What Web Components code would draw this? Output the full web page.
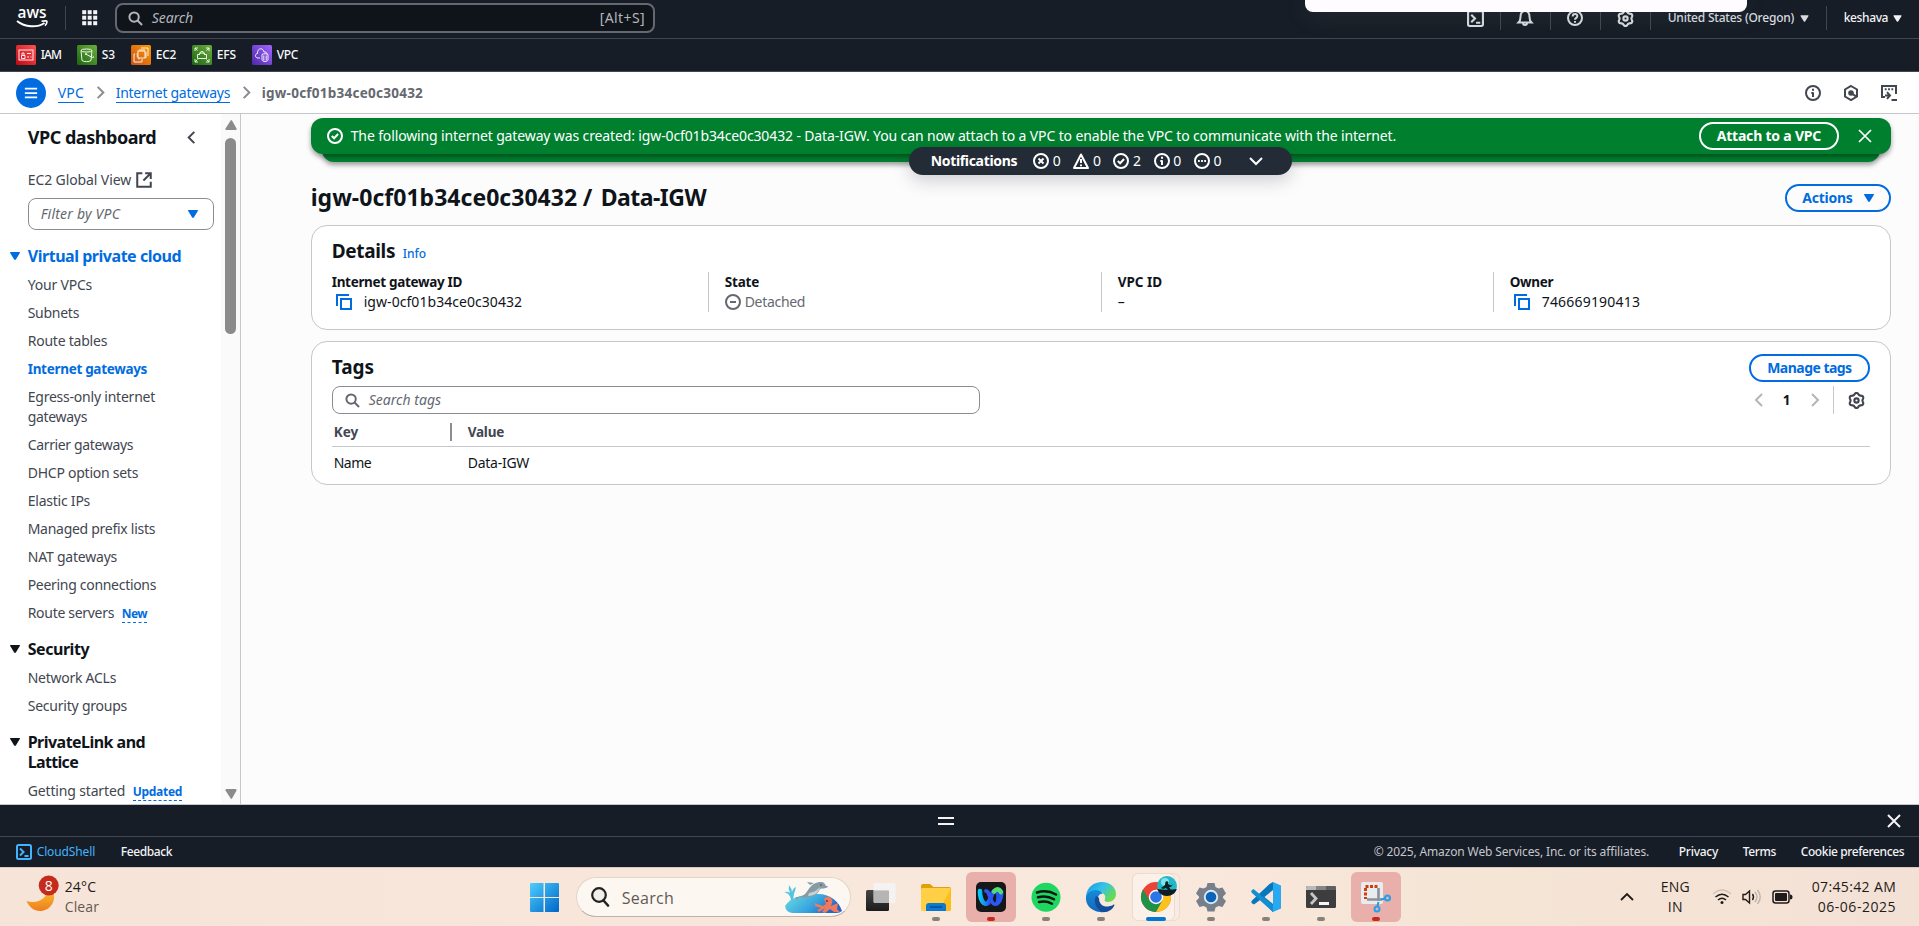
<!DOCTYPE html>
<html lang="en">
<head>
<meta charset="utf-8">
<title>igw-0cf01b34ce0c30432 | VPC Console</title>
<style>
html,body{margin:0;height:926px;overflow:hidden;background:#fcfcfd}
body{font:14px/20px "Noto Sans","Open Sans",sans-serif;color:#0f141a}
</style>
</head>
<body>
<console-app></console-app>
<script>
const define = (name, css, html, after) => customElements.define(name, class extends HTMLElement {
  connectedCallback() {
    if (this.shadowRoot) return;
    const root = this.attachShadow({mode: 'open'});
    root.innerHTML = `<style>*{box-sizing:border-box}:host{display:block;box-sizing:border-box}${css}</style>` + (typeof html === 'function' ? html(this) : html);
    if (after) after(this, root);
  }
});

/* Scalloped outline used by the settings icon */
const gear = (() => {
  const p = [];
  for (let i = 0; i < 96; i++) {
    const a = i / 96 * Math.PI * 2, r = 6.35 + 0.75 * Math.cos(6 * (a - Math.PI / 2));
    p.push((8 + r * Math.cos(a)).toFixed(2) + ' ' + (8 + r * Math.sin(a)).toFixed(2));
  }
  return 'M' + p.join('L') + 'Z';
})();

const icons = {
  search: '<circle cx="6.5" cy="6.5" r="5"/><path d="m10.2 10.2 4.8 4.8"/>',
  grid: [1,6.5,12].map(y => [1,6.5,12].map(x => `<path stroke="none" fill="currentColor" d="M${x-.8} ${y-.8}h4v4h-4z"/>`).join('')).join(''),
  shell: '<rect x="1" y="1" width="14" height="14" rx="1.5"/><path d="m4 4.5 3.5 3.5L4 11.500M8.500 12H12.500"/>',
  bell: '<path d="M1.500 12.500c1.500-1.500 2-3 2-5.500 0-3.500 1.500-6 4.500-6s4.500 2.500 4.500 6c0 2.500.5 4 2 5.500zM6 13c0 2.500 4 2.500 4 0"/>',
  help: '<circle cx="8" cy="8" r="7"/><path d="M5.700 6.400C5.700 3.200 10.400 3.400 10.300 6.200 10.200 7.800 8 8 8 9.800M8 11v1.700"/>',
  gear: `<path d="${gear}"/><circle cx="8" cy="8" r="2"/>`,
  info: '<circle cx="8" cy="8" r="7"/><path d="M6.300 8H8M8 7.200V12M8 3.800v1.900"/>',
  hex: '<path d="M8 1l6 3.500v7L8 15l-6-3.500v-7z"/><circle cx="8" cy="8" r="1.800" fill="currentColor"/><path d="m8 8 5 3.400"/>',
  termout: '<path d="M4 12H1V1h14v8"/><path d="M3.800 4.300h1.800M7.100 4.300h1.800M10.400 4.300h1.800"/><path d="M4 10.500H8M6 7.200l3 3.300-3 3.300M10.500 15H16"/>',
  left: '<path d="M11 2 5 8l6 6"/>',
  right: '<path d="m5 2 6 6-6 6"/>',
  down: '<path d="m2 5 6 6 6-6"/>',
  up: '<path d="m2 11 6-6 6 6"/>',
  close: '<path d="m2 2 12 12M14 2 2 14"/>',
  ext: '<path d="M6.500 2H2v12h12V9.500M9 2h5v5M14 2 7.500 8.500"/>',
  copy: '<path d="M2 12V1h12" transform="translate(-1)"/><path d="M5 5h10v10H5z"/>',
  caret: '<path stroke="none" fill="currentColor" d="M3.700 4h8.600q1.200 0 .5 1.100L9 11.300q-1 1.400-2 0L3.200 5.100Q2.500 4 3.700 4z"/>',
  ok: '<circle cx="8" cy="8" r="7"/><path d="m4.800 8 2.300 2.300 4-4.300"/>',
  err: '<circle cx="8" cy="8" r="7"/><path d="m5.500 5.500 5 5M10.500 5.500l-5 5"/>',
  warn: '<path d="M8 1.500 15 15H1zM8 6v4M8 11.500v1.700" stroke-linejoin="round"/>',
  dots: '<circle cx="8" cy="8" r="7"/><path d="M4 8h1.800M7.100 8h1.800M10.200 8H12"/>',
  minus: '<circle cx="8" cy="8" r="7"/><path d="M5 8h6"/>',
  drag: '<path d="M0 5h16M0 11h16"/>',
  menu: '<path d="M1 3h14M1 8h14M1 13h14"/>'
};
define('ui-icon', ':host{flex:none}svg{display:block;fill:none;stroke:currentColor}',
  e => `<svg width="${e.getAttribute('size') || 16}" height="${e.getAttribute('size') || 16}" viewBox="0 0 16 16" overflow="visible" stroke-width="${e.getAttribute('sw') || 2}">${icons[e.getAttribute('name')]}</svg>`);

/* Text run with a set advance width: tracking is spread over its letters */
const ruler = document.createElement('canvas').getContext('2d');
customElements.define('ui-t', class extends HTMLElement {
  connectedCallback() {
    if (!this.shadowRoot) this.attachShadow({mode: 'open'}).innerHTML = '<style>:host{display:inline-block;white-space:nowrap;flex:none;vertical-align:top;text-indent:-.3px}</style><slot></slot>';
    const a = n => this.getAttribute(n), size = a('s') || 14, weight = a('b') || 400, st = this.hasAttribute('i') ? 'italic' : 'normal';
    const fam = a('f') || '"Noto Sans","Open Sans",sans-serif';
    ruler.font = `${st} ${weight} ${size}px ${fam}`;
    const w = +a('w'), text = this.textContent;
    this.style.fontFamily = fam; this.style.fontSize = size + 'px'; this.style.fontWeight = weight; this.style.fontStyle = st;
    if (w) { this.style.width = w + 'px'; this.style.letterSpacing = ((w - ruler.measureText(text).width + .4) / text.length).toFixed(3) + 'px'; }
  }
});

define('ui-button', ':host{height:28px;border:2px solid currentColor;border-radius:20px;display:flex;align-items:center;justify-content:center;flex:none;gap:8px}', '<slot></slot>');
define('v-line', ':host{width:1px;background:#424650;height:24px;flex:none}', '');

define('aws-header', `:host{height:39px;background:#161d26;border-bottom:1px solid #424650;display:flex;align-items:center;padding:0 0 2px 16px;color:#d8dbe0;position:relative}
.logo{width:33px;height:22px;flex:none}.logo svg{display:block}
.s{margin-left:17px;width:540px;height:30px;border:2px solid #656871;border-radius:8px;background:#0f141a;display:flex;align-items:center;padding:0 8px 0 11px;color:#b4b4bb;flex:none}
.r{margin-left:auto;display:flex;align-items:center;padding-right:15px}
.pop{position:absolute;left:1305px;top:0;width:442px;height:12px;background:#fffcff;border-radius:0 0 8px 8px;box-shadow:0 4px 22px rgba(120,130,120,.18)}`,
`<div class="logo"><svg width="33" height="22" viewBox="0 0 33 22" overflow="visible"><text x="1.500" y="11" font-family="Open Sans" font-weight="600" font-size="16" textLength="29" lengthAdjust="spacingAndGlyphs" fill="#fff">aws</text><path d="M1 14C9 20.500 21 21 28.500 16" fill="none" stroke="#fff" stroke-width="2"/><path d="M25.500 14.300c4-.8 5.500-.5 5.500.3s-.8 3-2 4.200" fill="none" stroke="#fff" stroke-width="1.600"/></svg></div>
<v-line style="margin-left:16px"></v-line><ui-icon name="grid" style="margin-left:16px;color:#f3f3f7"></ui-icon>
<div class="s"><ui-icon name="search" size="15" sw="2.1"></ui-icon><ui-t i w="41" style="margin-left:9px">Search</ui-t><ui-t w="45" style="margin-left:auto">[Alt+S]</ui-t></div>
<div class="r"><ui-icon name="shell" size="17"></ui-icon><v-line style="margin:0 16px"></v-line><ui-icon name="bell"></ui-icon><v-line style="margin:0 16px 0 17px"></v-line><ui-icon name="help"></ui-icon><v-line style="margin:0 16px 0 17px"></v-line><ui-icon name="gear" size="17"></ui-icon><v-line style="margin:0 17px 0 16px"></v-line>
<ui-t s="12" b="500" w="126">United States (Oregon)</ui-t><ui-icon name="caret" size="13" style="margin-left:4px"></ui-icon><v-line style="margin:0 17px 0 15px"></v-line><ui-t s="12" b="500" w="44" style="color:#f3f3f7">keshava</ui-t><ui-icon name="caret" size="13" style="margin-left:3px;color:#f3f3f7"></ui-icon></div><div class="pop"></div>`);

const svc = {
  IAM: ['#bd0816','#ff5252','<rect x="3" y="5" width="14" height="10"/><path d="M5.500 13.500v-3h3.500v3zM6 10V8h2v2M11 8.500h4M11 12h2M14.500 12h1"/>'],
  S3: ['#1b660f','#6cae3e','<ellipse cx="9.500" cy="5.500" rx="5.500" ry="1.500"/><path d="m4 5.500 1 10c1.500 1.500 7.500 1.500 9 0l1-10M9.500 9.500l6 3c1.500.5 1.500-.8.3-1.500"/><circle cx="9" cy="9" r=".7"/>'],
  EC2: ['#c8511b','#ff9900','<rect x="7" y="6" width="7" height="7"/><path d="M9 4V6M11 4v2M13 4v2M14 8h2M14 10h2M14 12h2M8 13v1.500M5.500 9H7M5.500 11H7"/><path d="M10 3h7v8M4 9H3v8h8v-3"/>'],
  EFS: ['#1b660f','#6cae3e','<path d="M5.500 9.500h2l1-1.500h3l1 1.500h2v4h-9zM7.500 9.500c0-4 5-4 5 0M3 6V3h3M14 3h3v3M3 14v3h3M14 17h3v-3M3 3l2.500 2.500M17 3l-2.500 2.500M3 17l2.500-2.500M17 17l-2.500-2.500"/>'],
  VPC: ['#4d27a8','#a166ff','<path d="M8 13H6c-3 0-3.500-4-.5-4.500C5 3 11 2 12 7c1.500-.4 3 .5 3 2M10 9.500c1-1 5-1 6 0V15c-1 2-5 2-6 0zM11.800 10.500v5M14.200 10.500v5"/>']
};
define('aws-service', ':host{display:flex;align-items:center;gap:5px;color:#f9f9fa}svg{display:block}',
  e => { const n = e.getAttribute('name'), s = svc[n]; return `<svg width="20" height="20" viewBox="0 0 20 20" fill="none" stroke="#fff" stroke-width=".9"><defs><linearGradient id="g" x1="0" y1="1" x2="1" y2="0"><stop stop-color="${s[0]}"/><stop offset="1" stop-color="${s[1]}"/></linearGradient></defs><rect width="20" height="20" rx="1.500" fill="url(#g)" stroke="none"/>${s[2]}</svg><ui-t s="12" b="500" w="${e.getAttribute('w')}">${n}</ui-t>`; });
define('aws-favorites', ':host{height:33px;background:#161d26;border-bottom:1px solid #424650;display:flex;align-items:center;padding-left:16px;gap:16px}',
`<aws-service name="IAM" w="20"></aws-service><aws-service name="S3" w="13"></aws-service><aws-service name="EC2" w="20"></aws-service><aws-service name="EFS" w="19"></aws-service><aws-service name="VPC" w="21"></aws-service>`);

define('aws-breadcrumbs', `:host{height:42px;background:#fff;border-bottom:1px solid #c6c6cd;display:flex;align-items:center;padding:0 22px 0 16px;color:#424650}
.m{width:30px;height:30px;border-radius:50%;background:#006ce0;color:#fff;display:flex;align-items:center;justify-content:center}
.l{color:#006ce0;border-bottom:1px solid #006ce0;line-height:18px;margin-top:1px}.c{color:#8c8c94;margin:0 8.500px}`,
`<div class="m"><ui-icon name="menu" size="14"></ui-icon></div><ui-t class="l" w="26" style="margin-left:12px">VPC</ui-t><ui-icon class="c" name="right" size="15" sw="2.200"></ui-icon><ui-t class="l" w="114">Internet gateways</ui-t><ui-icon class="c" name="right" size="15" sw="2.200"></ui-icon><ui-t b="700" s="13.500" w="161" style="color:#656871">igw-0cf01b34ce0c30432</ui-t>
<ui-icon name="info" style="margin-left:auto"></ui-icon><ui-icon name="hex" style="margin-left:22px"></ui-icon><ui-icon name="termout" style="margin-left:22px"></ui-icon>`);

define('nav-item', ':host{padding:4px 0;margin-left:28px;line-height:20px;color:#424650}:host([on]){color:#006ce0}', '<slot></slot>');
define('nav-tag', ':host{display:inline-block;margin-left:8px;color:#006ce0;border-bottom:1px dashed #006ce0;line-height:17px;vertical-align:top;margin-top:2px;height:18px}', '<slot></slot>');
define('nav-head', ':host{display:flex;align-items:flex-start;gap:5px;margin:12px 0 5px 7px;line-height:20px}:host([on]){color:#006ce0}ui-icon{margin-top:2px}', '<ui-icon name="caret" size="16"></ui-icon><div><slot></slot></div>');
const items = a => a.map(([t, w, tag, tw]) => `<nav-item><ui-t w="${w}">${t}</ui-t>${tag ? `<nav-tag><ui-t s="12" b="700" w="${tw}">${tag}</ui-t></nav-tag>` : ''}</nav-item>`).join('');
define('aws-sidenav', `:host{width:241px;background:#fff;border-right:1px solid #c6c6cd;display:flex;flex:none;overflow:hidden}
.n{width:221px;flex:none}.t{display:flex;align-items:center;margin:11px 0 0 28px;height:24px}
.e{display:flex;align-items:center;gap:4px;margin:21px 0 0 28px;height:20px;color:#424650}
.f{margin:8px 0 0 28px;width:186px;height:32px;border:1px solid #8c8c94;border-radius:8px;display:flex;align-items:center;justify-content:space-between;padding:0 12px 0 12px;color:#656871}
.b{flex:1;background:#fafafa;display:flex;flex-direction:column;align-items:center;padding:4px 0 4px}
.th{width:11px;height:196px;border-radius:6px;background:#8b8b8b;margin-top:8px}`,
`<div class="n"><div class="t"><ui-t b="700" s="18" w="128">VPC dashboard</ui-t><ui-icon name="left" size="15" sw="2.100" style="margin-left:28px;color:#424650"></ui-icon></div>
<div class="e"><ui-t w="103">EC2 Global View</ui-t><ui-icon name="ext" size="18" sw="1.800"></ui-icon></div>
<div class="f"><ui-t i w="79">Filter by VPC</ui-t><ui-icon name="caret" style="color:#006ce0"></ui-icon></div>
<nav-head on style="margin-top:16px"><ui-t b="700" s="16" w="153">Virtual private cloud</ui-t></nav-head>
${items([['Your VPCs',64],['Subnets',51],['Route tables',79]])}<nav-item on><ui-t b="700" s="13.500" w="119">Internet gateways</ui-t></nav-item>
<nav-item><ui-t w="127">Egress-only internet</ui-t><br><ui-t w="59">gateways</ui-t></nav-item>
${items([['Carrier gateways',105],['DHCP option sets',110],['Elastic IPs',62],['Managed prefix lists',127],['NAT gateways',89],['Peering connections',128],['Route servers',86,'New',25]])}
<nav-head><ui-t b="700" s="16" w="61">Security</ui-t></nav-head>${items([['Network ACLs',88],['Security groups',99]])}
<nav-head><ui-t b="700" s="16" w="117">PrivateLink and</ui-t><br><ui-t b="700" s="16" w="50">Lattice</ui-t></nav-head>${items([['Getting started',97,'Updated',49]])}</div>
<div class="b"><svg width="14" height="12"><path d="M7 2 1.500 10.500q-.6 1.500 1 1.500h9q1.600 0 1-1.500L8 2.500z" fill="#8b8b8b"/></svg><div class="th"></div><svg width="14" height="12" style="margin-top:auto"><path d="M7 11 1.500 2.500Q1 1 2.500 1h9q1.600 0 1 1.500L8 10.500z" fill="#8b8b8b"/></svg></div>`);

define('aws-flashbar', `:host{position:relative;height:44px}
.b{height:36px;background:#00802f;border-radius:12px;display:flex;align-items:center;padding:0 18px 0 16px;color:#fff;position:relative;box-shadow:0 3px 5px rgba(0,0,0,.38)}
.u{height:20px;margin:-12px 11px 0;background:#00802f;border-radius:0 0 12px 12px;box-shadow:0 3px 5px rgba(0,0,0,.38)}
.n{position:absolute;left:598px;top:29px;width:383px;height:28px;border-radius:14px;background:#232b37;color:#fff;display:flex;align-items:center;padding-left:22px;box-shadow:0 6px 18px rgba(0,7,22,.18)}
.k{display:flex;gap:4px;align-items:center;width:40.200px}`,
`<div class="b"><ui-icon name="ok" size="16"></ui-icon><ui-t w="1045" style="margin-left:8px">The following internet gateway was created: igw-0cf01b34ce0c30432 - Data-IGW. You can now attach to a VPC to enable the VPC to communicate with the internet.</ui-t>
<ui-button style="margin-left:auto;width:140px"><ui-t b="700" w="104">Attach to a VPC</ui-t></ui-button><ui-icon name="close" sw="1.700" style="margin-left:18px"></ui-icon></div><div class="u"></div>
<div class="n"><ui-t b="700" w="86">Notifications</ui-t><span style="width:16px"></span>${[['err',0],['warn',0],['ok',2],['info',0],['dots',0]].map(([n, c]) => `<span class="k"><ui-icon name="${n}"></ui-icon><ui-t w="8">${c}</ui-t></span>`).join('')}<ui-icon name="down" style="margin-left:14px"></ui-icon></div>`);

define('ui-card', ':host{background:#fff;border:1px solid #c6c6cd;border-radius:16px;padding:12px 20px 0}', '<slot></slot>');
define('detail-pair', `:host{border-left:1px solid #c6c6cd;height:40px;padding-left:17px;flex:none}:host([first]){border:0;padding:0}.v{display:flex;align-items:center;height:20px}`, '<slot name="label"></slot><div class="v"><slot></slot></div>');
define('gateway-details', `h2{margin:0;height:28px;font-size:0;display:flex;align-items:baseline;line-height:24px}.r{display:flex;margin-top:6px}ui-t{line-height:20px}h2 ui-t{line-height:18px}ui-icon{color:#006ce0}`,
`<ui-card style="height:105px"><h2 style="line-height:26px"><ui-t b="700" s="19" w="63" style="line-height:26px">Details</ui-t><ui-t b="500" s="12" w="23" style="margin-left:8px;color:#006ce0">Info</ui-t></h2>
<div class="r" style="margin-top:6px"><detail-pair first style="width:376px"><ui-t slot="label" b="700" s="13.500" w="130">Internet gateway ID</ui-t><ui-icon name="copy" style="margin-left:4px"></ui-icon><ui-t w="158" style="margin-left:12px">igw-0cf01b34ce0c30432</ui-t></detail-pair>
<detail-pair style="width:393px;padding-left:16px"><ui-t slot="label" b="700" s="13.500" w="34">State</ui-t><ui-icon name="minus" style="color:#656871"></ui-icon><ui-t w="60" style="margin-left:4px;color:#656871">Detached</ui-t></detail-pair>
<detail-pair style="width:392px;padding-left:16px"><ui-t slot="label" b="700" s="13.500" w="44">VPC ID</ui-t><ui-t>–</ui-t></detail-pair>
<detail-pair style="padding-left:16px"><ui-t slot="label" b="700" s="13.500" w="43">Owner</ui-t><ui-icon name="copy" style="margin-left:4px"></ui-icon><ui-t w="98" style="margin-left:12px">746669190413</ui-t></detail-pair></div></ui-card>`);
define('gateway-tags', `.h,.f{display:flex;align-items:center;height:28px}.f{margin-top:4px}
.s{width:648px;height:28px;border:1px solid #8c8c94;border-radius:8px;display:flex;align-items:center;padding-left:12px;gap:9px;color:#656871}
.p{margin-left:auto;display:flex;align-items:center;color:#b4b4bb}
.th,.tr{display:flex;padding-left:2px;align-items:center}.th{height:33px;border-bottom:1px solid #c6c6cd;color:#424650;padding-top:3px}.tr{height:32px}
.k{width:116px;flex:none}.bar{width:2px;height:18px;background:#8c8c94;margin-right:16px}`,
`<ui-card style="height:144px"><div class="h"><ui-t b="700" s="19" w="42" style="margin-top:-2px">Tags</ui-t><ui-button style="margin-left:auto;width:121px;color:#006ce0"><ui-t b="700" w="84">Manage tags</ui-t></ui-button></div>
<div class="f"><div class="s"><ui-icon name="search" size="15" sw="2.100"></ui-icon><ui-t i w="72">Search tags</ui-t></div><div class="p"><ui-icon name="left"></ui-icon><ui-t b="700" s="13.500" w="8" style="margin:0 16px;color:#0f141a">1</ui-t><ui-icon name="right"></ui-icon><v-line style="height:28px;background:#c6c6cd;margin:0 14px 0 10px"></v-line><ui-icon name="gear" size="17" style="color:#424650;margin-right:5px"></ui-icon></div></div>
<div class="th"><ui-t class="k" b="700" s="13.500">Key</ui-t><span class="bar"></span><ui-t b="700" s="13.500" w="36">Value</ui-t></div>
<div class="tr"><span style="width:134px"><ui-t w="37">Name</ui-t></span><ui-t w="61">Data-IGW</ui-t></div></ui-card>`);

define('gateway-page', `:host{flex:1;padding:4px 28px 0 70px;background:#fcfcfd}.t{display:flex;align-items:center;justify-content:space-between;height:28px;margin:22px 0 13px}`,
`<aws-flashbar></aws-flashbar><div class="t"><div style="margin-top:-2px;white-space:nowrap"><ui-t b="700" s="23" w="266">igw-0cf01b34ce0c30432</ui-t><ui-t b="700" s="23" w="10" style="margin-left:6px">/</ui-t><ui-t b="700" s="23" w="105" style="margin-left:8px">Data-IGW</ui-t></div><ui-button style="width:106px;color:#006ce0"><ui-t b="700" w="50">Actions</ui-t><ui-icon name="caret" style="margin-right:-3px"></ui-icon></ui-button></div>
<gateway-details></gateway-details><gateway-tags style="margin-top:11px"></gateway-tags>`);

define('aws-footer', `:host{background:#161d26;height:63px;border-top:1px solid #c6c6cd;color:#f3f3f7}
.d{height:32px;border-bottom:1px solid #424650;display:flex;align-items:center;padding:1px 17px 0 938px;justify-content:space-between}.f{display:flex;align-items:center;height:30px;padding:0 15px 0 16px;line-height:18px}.f ui-t{margin-top:-1px}`,
`<div class="d"><ui-icon name="drag" sw="1.800"></ui-icon><ui-icon name="close"></ui-icon></div>
<div class="f"><ui-icon name="shell" style="color:#42b4ff"></ui-icon><ui-t s="12" w="58" style="margin-left:5px;color:#42b4ff">CloudShell</ui-t><ui-t s="12" b="500" w="51" style="margin-left:26px">Feedback</ui-t>
<ui-t s="12" w="275" style="margin-left:auto;color:#c6c6cd">© 2025, Amazon Web Services, Inc. or its affiliates.</ui-t><ui-t s="12" b="500" w="39" style="margin-left:30px">Privacy</ui-t><ui-t s="12" b="500" w="33" style="margin-left:25px">Terms</ui-t><ui-t s="12" b="500" w="103" style="margin-left:25px">Cookie preferences</ui-t></div>`);

const apps = {
  start: '<defs><linearGradient id="a" gradientUnits="userSpaceOnUse" x1="0" y1="0" x2="29" y2="29"><stop stop-color="#4fd0ff"/><stop offset="1" stop-color="#0067c8"/></linearGradient></defs><path fill="url(#a)" d="M0 2q0-1 1-1H13.500v14H0zM15 1H28q1 0 1 1v13H15zM0 16H13.500v14H1q-1 0-1-1zM15 16H29v13q0 1-1 1H15z"/>',
  view: '<defs><linearGradient id="a" x2="0" y2="1"><stop stop-color="#444"/><stop offset="1" stop-color="#1c1c1c"/></linearGradient></defs><rect y="8" width="23" height="21" rx="1.500" fill="url(#a)"/><rect x="7.500" y="1" width="22" height="20" rx="1.500" fill="#f4f4f4" opacity=".92"/><path d="M8 8.500h15V21H8z" fill="#b7b5b3"/>',
  files: '<path d="M0 4q0-2 2-2h7l3.500 3H28q2 0 2 2v4H0z" fill="#dfa008"/><rect y="6" width="30" height="23" rx="1.500" fill="#ffd045"/><path d="M30 6v21q0 2-2 2H18z" fill="#fdbd1a"/><path d="M5 29v-5q0-3 3-3h14q3 0 3 3v5z" fill="#0d78cf"/><path d="M9 25h12" stroke="#054e92" stroke-width="1.400"/>',
  webex: '<defs><linearGradient id="a"><stop stop-color="#08c7f4"/><stop offset=".5" stop-color="#2855f2"/><stop offset="1" stop-color="#2454ed"/></linearGradient></defs><rect width="30" height="30" rx="5" fill="#151719"/><path d="M4 9c0 9 4 15 8 12 4-4 3-12 7-12 4 0 4 6 3 10" fill="none" stroke="url(#a)" stroke-width="4.600" stroke-linecap="round"/><path d="M25.500 12c-1 9-6 13-9.500 8-3-6-3-11-6-11" fill="none" stroke="#2b58f5" stroke-width="3.800" stroke-linecap="round"/><path d="M18 9.500q4-4.500 7 .5" fill="none" stroke="#52dc72" stroke-width="4.600" stroke-linecap="round"/>',
  spotify: '<circle cx="15" cy="15.300" r="14.500" fill="#1ed760"/><path d="M6 10.500c6-2 13-1.500 19 2M7 15.300c5-1.500 11-1 16 2M8 20c5-1.200 9-.7 13 1.700" fill="none" stroke="#101510" stroke-width="2.500" stroke-linecap="round"/>',
  edge: '<defs><linearGradient id="a" x2="1" y2=".6"><stop stop-color="#1593dc"/><stop offset=".5" stop-color="#33c0ef"/><stop offset="1" stop-color="#69dc4e"/></linearGradient><linearGradient id="b" x2="0" y2="1"><stop stop-color="#168bda"/><stop offset="1" stop-color="#1268b7"/></linearGradient></defs><path d="M0 14C1 5 8 0 16 0c8 0 14 5 14 12 0 5-4 8-8 8-3 0-4-1-3-3 2-6-7-11-19-3z" fill="url(#a)"/><path d="M0 14C4 7 13 6 17 12c-4-1-6 3-4 8 2 5 8 8 14 5-4 5-9 6-13 5C5 29-1 23 0 14z" fill="url(#b)"/><path d="M10 14c-3 5 0 14 7 16 5 0 9-2 11-6 1-1 0-2-1-1-6 3-14 2-14-7z" fill="#114d99"/>',
  chrome: '<circle cx="15" cy="15" r="15" fill="#eb4335"/><path d="M2 7.500A15 15 0 0 0 15 30L21.500 18.500 8.500 18.500z" fill="#1e9248"/><path d="M15 30A15 15 0 0 0 28 7.500H15L21.500 18.500z" fill="#fcc31e"/><circle cx="15" cy="15" r="7.200" fill="#fff"/><circle cx="15" cy="15" r="5.800" fill="#2a75e8"/><circle cx="26" cy="4" r="10" fill="#21b9c9"/><circle cx="24" cy="0" r="4" fill="#7de4ea"/><path d="M16.300 7c5 1 14 1 19.400 0-1 4-5 7-9.700 7s-8.700-3-9.700-7z" fill="#121d22"/><path d="m20 6 4-3 .5-3 1.500-1 1.500 1.500L27 2l3 1.500L32 2l-2 3h-2l2 3h-3l-2-2-3 1z" fill="#082326"/>',
  settings: '<path d="M11.500 1h7l1 4 3 1.500 4-1 3.500 6-3 3v1.500l3 3-3.500 6-4-1-3 1.500-1 4h-7l-1-4-3-1.500-4 1-3.500-6 3-3v-1.500l-3-3 3.500-6 4 1 3-1.500z" fill="#77808a"/><circle cx="15" cy="15" r="7.200" fill="#dce9f4"/><circle cx="15" cy="15" r="5.300" fill="#0b64b8"/>',
  vscode: '<path d="M22 0v30L9 18 3 22.500.5 21v-2l18-17z" fill="#0877bc"/><path d="m0 9 2.500-2L22 23v7L1 11z" fill="#128ed4"/><path d="m22 0 8 3.500v23L22 30z" fill="#27a8f0"/><path d="M22 8v14l-8.500-7z" fill="#f6e5da"/>',
  term: '<rect y="4" width="30" height="22" rx="1.500" fill="#3d3d3d"/><path d="M0 8V5.500Q0 4 1.500 4H10v4z" fill="#b9b9b9"/><path d="M10 4h10v4H10z" fill="#868686"/><path d="M20 4h8.500Q30 4 30 5.500V8H20z" fill="#606060"/><path d="m5 11 5 5.500L5 22" fill="none" stroke="#c7c7c7" stroke-width="2.800"/><rect x="13" y="20" width="10" height="3" fill="#f5f5f5"/>',
  snip: '<rect width="22" height="22" rx="2" fill="#e9ecef"/><path d="M16.500 4.500H4.500V17" fill="none" stroke="#d33b08" stroke-width="3" stroke-dasharray="3 1.500"/><path d="M17.500 6v13M6 17.500h15" stroke="#8a9199" stroke-width="2.600"/><path d="m20 17.500 4-1M17.500 20l-1 4" stroke="#229be2" stroke-width="2"/><circle cx="26.500" cy="16" r="2.500" fill="none" stroke="#22a0ea" stroke-width="2"/><circle cx="16" cy="27" r="2.500" fill="none" stroke="#22a0ea" stroke-width="2"/>'
};
define('task-app', `:host{width:50px;height:50px;position:relative;border-radius:6px;flex:none;padding:10px}svg{display:block}
:host([alert]){background:#e8afab}.i{position:absolute;left:21px;bottom:1px;width:8px;height:4px;border-radius:2px;background:#88817b}:host([alert]) .i{background:#c42b1c}
:host([active]) .i{left:15px;width:20px;background:#0078d4}.w{position:absolute;inset:1px 6px 1px 1px;border-radius:6px;background:#fcf1e9;border:1px solid #eadcd3}.w.k{right:1px;background:#f9ebe1}svg{position:relative}`,
 e => `${e.hasAttribute('active') ? '<div class="w k"></div><div class="w"></div>' : ''}<svg width="30" height="30" viewBox="0 0 30 30" overflow="visible">${apps[e.getAttribute('app')]}</svg>${e.hasAttribute('run') ? '<div class="i"></div>' : ''}`);

const seg = `f='"Open Sans","Noto Sans",sans-serif'`;
define('win-taskbar', `:host{height:59px;background:linear-gradient(90deg,#f7e4d8,#f8e6da 30%,#f9e8dc 60%,#f5e5d5 78%,#f4e1d6);border-top:1px solid #d9c9be;display:flex;align-items:center;color:#1f1b19}
.w{width:520px;flex:none;display:flex;padding-left:27px;align-items:center}.w svg{display:block}.w div,.c div{line-height:20px;height:20px}
.p{width:275px;height:40px;margin:0 5px 0 6px;border-radius:20px;background:#fdf7f2;border:1px solid #e3d5cb;border-bottom-color:#bfb2aa;display:flex;align-items:center;padding:0 7px 0 14px;flex:none}
.a{display:flex;gap:5px}.c{display:flex;align-items:center;margin-left:auto;padding-right:23px}`,
`<div class="w"><svg width="32" height="38" viewBox="0 0 32 38" overflow="visible"><defs><linearGradient id="m" x2="0" y2="1"><stop stop-color="#f6bd2e"/><stop offset="1" stop-color="#f07c1e"/></linearGradient></defs><path d="M26 13c4 10-3 20-13 20-6 0-11-4-13.500-10C9 26 19 22 20 13z" fill="url(#m)"/><circle cx="21.700" cy="7.500" r="10" fill="#c42b1c"/><text x="21.700" y="12.500" text-anchor="middle" font-family="Open Sans" font-size="14" fill="#fff">8</text></svg>
<div style="margin:-1px 0 0 6px;height:40px"><div><ui-t ${seg} w="31">24°C</ui-t></div><div style="color:#65594f"><ui-t ${seg} w="34">Clear</ui-t></div></div></div>
<task-app app="start"></task-app>
<div class="p"><svg width="19" height="20" viewBox="0 0 19 20"><circle cx="8" cy="8" r="6.800" fill="#f4eeea" stroke="#222" stroke-width="2.200"/><path d="m12.500 13.500 4.500 5" stroke="#222" stroke-width="2.600" stroke-linecap="round"/></svg><ui-t ${seg} s="16" w="52" style="margin-left:12px;margin-top:1px;color:#625a55">Search</ui-t>
<svg width="60" height="34" viewBox="0 0 60 34" style="margin-left:auto"><defs><linearGradient id="s" x2="1" y2=".4"><stop stop-color="#6fdde0"/><stop offset=".6" stop-color="#38a6df"/><stop offset="1" stop-color="#2166c9"/></linearGradient></defs><path d="M2 26C7 17 22 14 35 14s21 8 24 17q-2 2-6 2H10Q3 33 2 26z" fill="url(#s)"/><path d="M8 20Q7 13 1 12q4-1 6 1-2-4-1-8 3 4 3 7 1-4 4-5-1 4-2 7l-1 6z" fill="#52c3e2"/><path d="M12 17c7 0 10-2 13-7 4-6 8-8 13-8 3 0 4 2 5 4 1 0 2 0 2 1-3 2-6 1-8 2-3 7-10 10-21 8l-2 3-1-2zM27 5l-3-3 7 1z" fill="#869ba3"/><path d="M26 13c6-1 8-3 11-6-1 5-5 9-12 9z" fill="#c8d1d1"/><circle cx="38" cy="5" r=".7" fill="#2c3438"/><path d="M41 19c2-3 7-3 8 1 1 3-1 5-1 6l7-3-1 6 3 3h-6l-4-3-5 4-3-1 3-4-6 4-2-2 4-2-6-2v-3l8 3 3-2z" fill="#f0785c"/><circle cx="44" cy="21" r="1" fill="#722f2b"/></svg></div>
<div class="a"><task-app app="view"></task-app><task-app app="files" run></task-app><task-app app="webex" alert run></task-app><task-app app="spotify" run></task-app><task-app app="edge" run></task-app><task-app app="chrome" active run></task-app><task-app app="settings" run></task-app><task-app app="vscode" run></task-app><task-app app="term" run></task-app><task-app app="snip" alert run></task-app></div>
<div class="c"><ui-icon name="up" sw="1.800"></ui-icon><div style="height:40px;text-align:center;margin:0 0 0 26px"><div><ui-t ${seg} w="29">ENG</ui-t></div><div><ui-t ${seg} w="15">IN</ui-t></div></div>
<svg width="20" height="18" viewBox="0 0 20 18" fill="none" stroke="#1f1b19" stroke-width="1.500" style="margin-left:22px"><path d="M1 6Q10-2 19 6" stroke="#d0c1b6"/><path d="M3.500 9q6.500-5.500 13 0M6 12q4-3.500 8 0"/><circle cx="10" cy="14.500" r="1.500" fill="#1f1b19" stroke="none"/></svg>
<svg width="20" height="18" viewBox="0 0 20 18" fill="none" stroke="#1f1b19" stroke-width="1.400" style="margin-left:10px"><path d="M1 6.500h2.500l4-3.500v12l-4-3.500H1z"/><path d="M10.500 6q2 3 0 6"/><path d="M13 4q4 5 0 10M15.500 2q5.500 7 0 14" stroke="#c3b4aa"/></svg>
<svg width="21" height="14" viewBox="0 0 21 14" style="margin-left:10px"><rect x="1" y="1" width="16" height="12" rx="2.500" fill="none" stroke="#1f1b19" stroke-width="1.500"/><rect x="3" y="3" width="12" height="8" rx="1" fill="#1f1b19"/><path d="M18 4.500q2.500 0 2.500 2.500T18 9.500z" fill="#1f1b19"/></svg>
<div style="height:40px;text-align:right;margin:-1px 0 0 19px"><div><ui-t ${seg} w="84">07:45:42 AM</ui-t></div><div><ui-t ${seg} w="78">06-06-2025</ui-t></div></div></div>`);

define('console-app', ':host{height:926px;display:flex;flex-direction:column}.m{display:flex;height:690px;overflow:hidden}',
`<aws-header></aws-header><aws-favorites></aws-favorites><aws-breadcrumbs></aws-breadcrumbs><div class="m"><aws-sidenav></aws-sidenav><gateway-page></gateway-page></div><aws-footer></aws-footer><win-taskbar></win-taskbar>`);
</script>
</body>
</html>
